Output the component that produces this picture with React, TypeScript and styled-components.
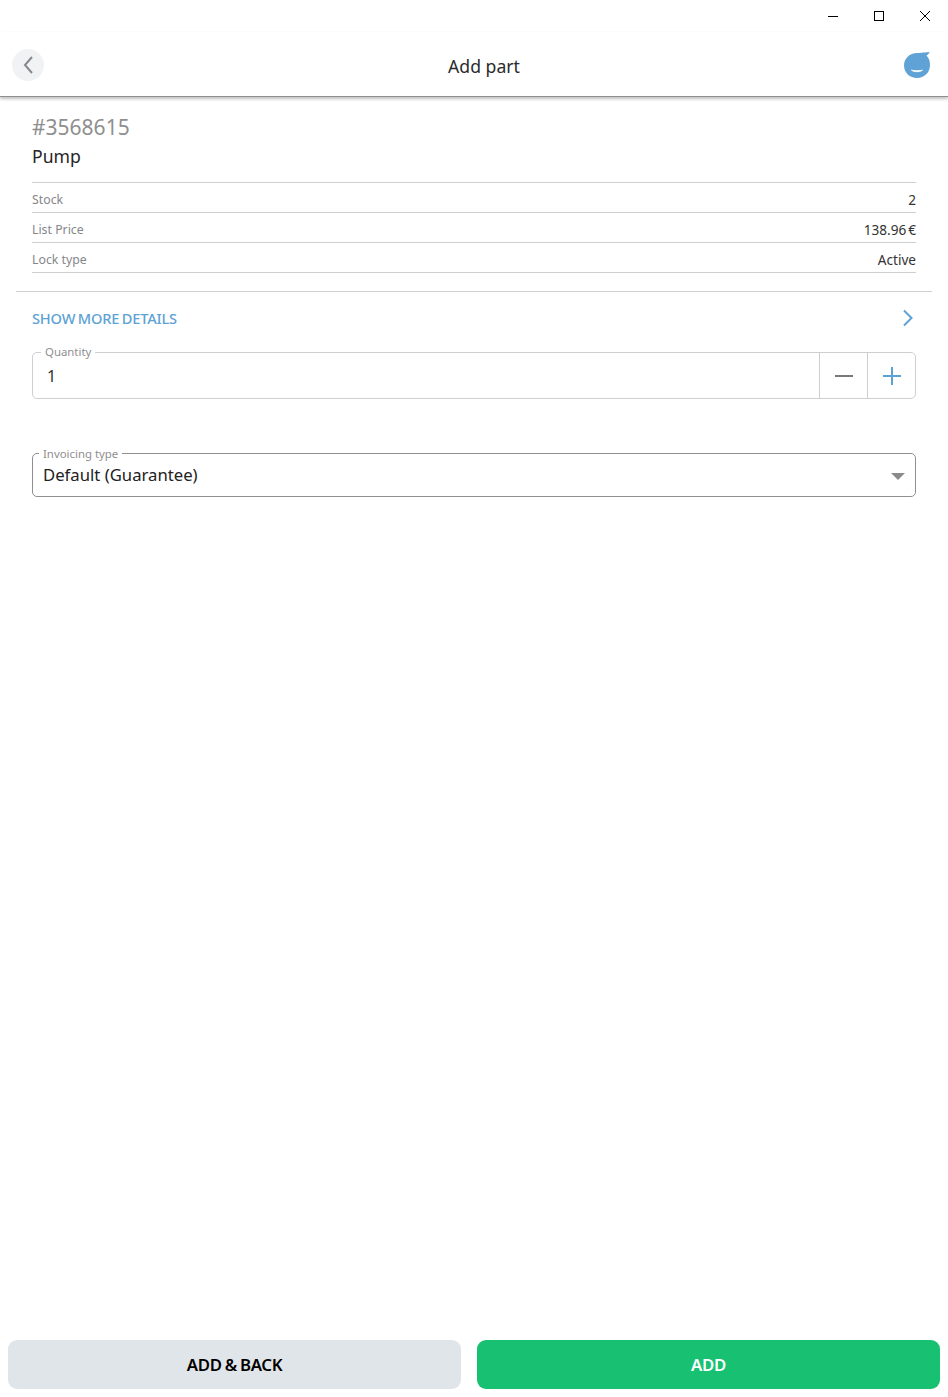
import React from "react";
import styled, { createGlobalStyle } from "styled-components";

const Global = createGlobalStyle`
  html, body { margin: 0; padding: 0; background: #fff; }
  body { font-family: "Noto Sans", "Open Sans", sans-serif; color: #222; }
  * { box-sizing: border-box; }
`;

const Page = styled.div`
  width: 948px;
  height: 1397px;
  display: flex;
  flex-direction: column;
  background: #fff;
`;

const TitleBar = styled.div`
  height: 32px;
  display: flex;
  justify-content: flex-end;
`;

const WinButton = styled.div`
  width: 46px;
  height: 32px;
  display: flex;
  align-items: center;
  justify-content: center;
`;

const Header = styled.header`
  height: 65px;
  padding: 2px 18px 0 12px;
  display: flex;
  align-items: center;
  justify-content: space-between;
  border-bottom: 1px solid #8f8f8f;
  box-shadow: 0 2px 3px rgba(0, 0, 0, 0.25);
  position: relative;
`;

const BackButton = styled.div`
  width: 32px;
  height: 32px;
  border-radius: 50%;
  background: #f1f2f4;
  display: flex;
  align-items: center;
  justify-content: center;
`;

const HeaderTitle = styled.h1`
  margin: 2px 0 0 20px;
  font-size: 17.6px;
  font-weight: 400;
  color: #2b2b2b;
  line-height: 24px;
`;

const Content = styled.main`
  flex: 1;
  display: flex;
  flex-direction: column;
  padding: 0 16px;
`;

const PartBlock = styled.section`
  padding: 18px 16px 18px;
`;

const PartNumber = styled.div`
  font-size: 21px;
  line-height: 24px;
  color: #8f8f8f;
`;

const PartName = styled.div`
  font-size: 17.6px;
  line-height: 24px;
  margin-top: 5px;
  margin-bottom: 14px;
  color: #262626;
`;

const InfoRow = styled.div`
  height: 30px;
  display: flex;
  align-items: center;
  justify-content: space-between;
  border-top: 1px solid #cfcfd3;
  padding-top: 4px;
  &:last-child { height: 31px; border-bottom: 1px solid #cfcfd3; }
`;

const InfoLabel = styled.span`
  font-size: 12.3px;
  color: #85878a;
`;

const InfoValue = styled.span`
  font-size: 13.6px;
  word-spacing: -1.5px;
  color: #333;
`;

const DetailsLink = styled.div`
  border-top: 1px solid #d0d0d4;
  height: 53px;
  padding: 0 18px 0 16px;
  display: flex;
  align-items: center;
  justify-content: space-between;
  color: #5da2d5;
  font-size: 14.6px;
  font-weight: 500;
  letter-spacing: -0.2px;
  word-spacing: -1px;
`;

const FieldWrap = styled.div`
  margin: 8px 16px 0;
  height: 47px;
  position: relative;
  display: flex;
  border: 1px solid #cfcfd3;
  border-radius: 5px;
`;

const FloatLabel = styled.span`
  position: absolute;
  top: -8px;
  left: 8px;
  padding: 0 4px;
  background: #fff;
  font-size: 11.4px;
  line-height: 14px;
  color: #8f8f8f;
`;

const SelectLabel = styled(FloatLabel)`
  top: -7px;
  left: 6px;
`;

const QtyValue = styled.div`
  flex: 1;
  padding-left: 14px;
  font-size: 16px;
  display: flex;
  align-items: center;
  color: #333;
`;

const QtyButton = styled.div`
  width: 48px;
  border-left: 1px solid #cfcfd3;
  display: flex;
  align-items: center;
  justify-content: center;
`;

const SelectBox = styled.div`
  margin: 54px 16px 0;
  height: 44px;
  position: relative;
  display: flex;
  align-items: center;
  justify-content: space-between;
  border: 1px solid #8f8f8f;
  border-radius: 5px;
  padding: 0 10px;
  font-size: 16.7px;
  color: #222;
`;

const SelectValue = styled.span`
  margin-bottom: 2px;
`;

const Caret = styled.span`
  width: 0;
  height: 0;
  border-left: 7.5px solid transparent;
  border-right: 7.5px solid transparent;
  border-top: 7.5px solid #8b8b8b;
  transform: translateY(1px);
`;

const Footer = styled.footer`
  height: 57px;
  padding: 0 8px 8px;
  display: flex;
  gap: 16px;
`;

const ActionButton = styled.button<{ $primary?: boolean; $width: number }>`
  flex: 0 0 ${(p) => p.$width}px;
  border: 0;
  border-radius: 9px;
  font-family: inherit;
  font-size: 16.8px;
  font-weight: 600;
  letter-spacing: -0.3px;
  word-spacing: -1px;
  background: ${(p) => (p.$primary ? "#17c171" : "#e0e5e9")};
  color: ${(p) => (p.$primary ? "#fff" : "#000")};
`;

const rows = [
  ["Stock", "2"],
  ["List Price", "138.96 €"],
  ["Lock type", "Active"],
];

export default function App() {
  return (
    <Page>
      <Global />
      <TitleBar>
        <WinButton>
          <svg width="10" height="10" viewBox="0 0 10 10">
            <path d="M0 5.5H10" stroke="#000" strokeWidth="1" />
          </svg>
        </WinButton>
        <WinButton>
          <svg width="10" height="10" viewBox="0 0 10 10">
            <rect x="0.5" y="0.5" width="9" height="9" fill="none" stroke="#000" />
          </svg>
        </WinButton>
        <WinButton>
          <svg width="10" height="10" viewBox="0 0 10 10">
            <path d="M0 0L10 10M10 0L0 10" stroke="#000" strokeWidth="1" />
          </svg>
        </WinButton>
      </TitleBar>
      <Header>
        <BackButton>
          <svg width="12" height="20" viewBox="0 0 12 20">
            <path d="M10 2L3 10L10 18" fill="none" stroke="#85898d" strokeWidth="2" />
          </svg>
        </BackButton>
        <HeaderTitle>Add part</HeaderTitle>
        <svg width="26" height="26" viewBox="0 0 26 26">
          <path
            d="M13 1C15.5 1 23 0.3 26 0C25 1.5 23.5 3 22.5 3.6C24.8 6 26 8.8 26 13.3C26 20.5 20.5 26 13 26C5.8 26 0 20.5 0 13.5C0 6.5 5.8 1 13 1Z"
            fill="#5fa3d6"
          />
          <path d="M7.5 18.2C10.5 20.2 15.5 20.2 18.5 18.2C15.5 18.8 10.5 18.8 7.5 18.2Z" fill="#fff" stroke="#fff" strokeWidth="0.8" />
        </svg>
      </Header>
      <Content>
        <PartBlock>
          <PartNumber>#3568615</PartNumber>
          <PartName>Pump</PartName>
          {rows.map(([label, value]) => (
            <InfoRow key={label}>
              <InfoLabel>{label}</InfoLabel>
              <InfoValue>{value}</InfoValue>
            </InfoRow>
          ))}
        </PartBlock>
        <DetailsLink>
          <span>SHOW MORE DETAILS</span>
          <svg width="12" height="18" viewBox="0 0 12 18">
            <path d="M2 1.5L9.5 9L2 16.5" fill="none" stroke="#5da2d5" strokeWidth="2" />
          </svg>
        </DetailsLink>
        <FieldWrap>
          <FloatLabel>Quantity</FloatLabel>
          <QtyValue>1</QtyValue>
          <QtyButton>
            <svg width="18" height="18" viewBox="0 0 18 18">
              <path d="M0 9H18" stroke="#77797c" strokeWidth="2" />
            </svg>
          </QtyButton>
          <QtyButton>
            <svg width="18" height="18" viewBox="0 0 18 18">
              <path d="M0 9H18M9 0V18" stroke="#5da2d5" strokeWidth="2" />
            </svg>
          </QtyButton>
        </FieldWrap>
        <SelectBox>
          <SelectLabel>Invoicing type</SelectLabel>
          <SelectValue>Default (Guarantee)</SelectValue>
          <Caret />
        </SelectBox>
      </Content>
      <Footer>
        <ActionButton $width={453}>ADD &amp; BACK</ActionButton>
        <ActionButton $primary $width={463}>ADD</ActionButton>
      </Footer>
    </Page>
  );
}
